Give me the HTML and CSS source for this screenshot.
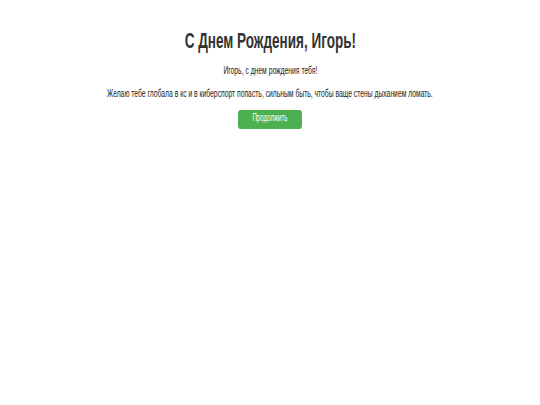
FILE: index.html
```html
<!DOCTYPE html>
<html lang="ru">
<head>
<meta charset="utf-8">
<title>С Днем Рождения</title>
<link rel="stylesheet" href="styles.css">
</head>
<body>
<main class="card">
  <h1 class="title">С Днем Рождения, Игорь!</h1>
  <p class="text">Игорь, с днем рождения тебя!</p>
  <p class="text">Желаю тебе глобала в кс и в киберспорт попасть, сильным быть, чтобы ваще стены дыханием ломать.</p>
  <button class="btn">Продолжить</button>
</main>
</body>
</html>
```
FILE: styles.css
```css
html, body {
  margin: 0;
  padding: 0;
  background: #ffffff;
}
body {
  font-family: "Liberation Sans", Arial, sans-serif;
  color: #222;
}
.card {
  display: flex;
  flex-direction: column;
  align-items: center;
  padding-top: 28px;
  white-space: nowrap;
}
.card > * {
  transform: scaleX(0.615);
  transform-origin: 50% 50%;
}
.title {
  margin: 0;
  font-size: 22px;
  font-weight: bold;
  color: #333;
}
.text {
  margin: 10px 0 0;
  font-size: 11px;
}
.text + .text {
  margin-top: 11px;
}
.btn {
  margin-top: 11px;
  background: #4caf50;
  color: #fff;
  border: none;
  border-radius: 4px;
  width: 104px;
  height: 19px;
  padding: 0 0 5px;
  font-family: inherit;
  font-size: 10px;
}
```
